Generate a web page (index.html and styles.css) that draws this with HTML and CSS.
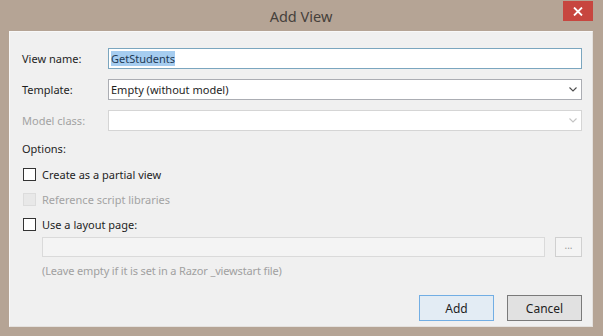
FILE: index.html
```html
<!DOCTYPE html>
<html lang="en">
<head>
<meta charset="UTF-8" />
<title>Add View</title>
<link rel="stylesheet" href="styles.css">
</head>

<body>
    <div class="window">
        <div class="titlebar">
            <span></span>
            <span class="title">Add View</span>
            <button class="close" aria-label="Close">
                <svg width="10" height="9" viewBox="0 0 10 9">
                    <path d="M1 0.5 L9 8.5 M9 0.5 L1 8.5" stroke="#fff" stroke-width="1.8" fill="none" />
                </svg>
            </button>
        </div>

        <div class="content">
            <div class="field-row">
                <label class="field-label">View name:</label>
                <div class="textbox focused"><span class="selected">GetStudents</span></div>
            </div>
            <div class="field-row">
                <label class="field-label">Template:</label>
                <div class="combo">
                    <span>Empty (without model)</span>
                    <svg class="chevron" width="8" height="5" viewBox="0 0 8 5">
                        <path d="M0.5 0.5 L4 4 L7.5 0.5" stroke="#4d4d4d" stroke-width="1.1" fill="none" />
                    </svg>
                </div>
            </div>
            <div class="field-row disabled">
                <label class="field-label">Model class:</label>
                <div class="combo">
                    <span></span>
                    <svg class="chevron" width="8" height="5" viewBox="0 0 8 5">
                        <path d="M0.5 0.5 L4 4 L7.5 0.5" stroke="#c4c4c4" stroke-width="1.1" fill="none" />
                    </svg>
                </div>
            </div>

            <div class="options-label">Options:</div>
            <div class="check-row"><span class="checkbox"></span>Create as a partial view</div>
            <div class="check-row disabled"><span class="checkbox"></span>Reference script libraries</div>
            <div class="check-row"><span class="checkbox"></span>Use a layout page:</div>

            <div class="layout-row">
                <div class="textbox disabled"></div>
                <button class="browse">...</button>
            </div>
            <div class="hint">(Leave empty if it is set in a Razor _viewstart file)</div>

            <div class="actions">
                <button class="btn primary">Add</button>
                <button class="btn">Cancel</button>
            </div>
        </div>
    </div>
</body>

</html>
```

FILE: styles.css
```css
body {
    margin: 0;
    background-color: #b5a495;
    font-family: "Segoe UI", "Noto Sans", sans-serif;
    font-size: 11px;
    color: #1e1e1e;
}

.window {
    height: 336px;
    box-sizing: border-box;
    padding: 0 10px 9px 9px;
    display: flex;
    flex-direction: column;
}

/* Title bar */
.titlebar {
    height: 31px;
    display: grid;
    grid-template-columns: 1fr auto 1fr;
    align-items: start;
}

.title {
    font-size: 14.5px;
    color: #45403b;
    padding-top: 6px;
}

.close {
    justify-self: end;
    width: 30px;
    height: 20px;
    margin-top: 1px;
    border: none;
    padding: 0;
    background-color: #c7463f;
    display: flex;
    align-items: center;
    justify-content: center;
}

/* Dialog body */
.content {
    flex: 1;
    background-color: #f0f0f0;
    border: 1px solid #f8f8f8;
    border-right-color: #e4e1de;
    border-bottom-color: #e4e1de;
    padding: 16px 10px 0 12px;
    display: flex;
    flex-direction: column;
}

.field-row {
    display: flex;
    align-items: center;
    height: 21px;
    margin-bottom: 10px;
}

.field-label {
    width: 86px;
    flex-shrink: 0;
}

.textbox,
.combo {
    flex: 1;
    height: 21px;
    box-sizing: border-box;
    border: 1px solid #abadb3;
    background-color: #fff;
    padding: 0 2px;
    display: flex;
    align-items: center;
}

.textbox.focused {
    border-color: #7ba6bf;
}

.selected {
    background-color: #a6cdf0;
    color: #1f3a55;
    line-height: 15px;
}

.combo {
    justify-content: space-between;
    padding-right: 4px;
}

.disabled {
    color: #a3a3a3;
}

.disabled .combo {
    border-color: #d5d5d5;
}

.options-label {
    line-height: 16px;
}

.check-row {
    display: flex;
    align-items: center;
    height: 16px;
    margin-top: 9px;
    padding-left: 1px;
}

.checkbox {
    width: 13px;
    height: 13px;
    box-sizing: border-box;
    border: 1px solid #333;
    background-color: #fff;
    margin-right: 6px;
}

.check-row.disabled .checkbox {
    border-color: #dcdcdc;
    background-color: #e8e8e8;
}

.layout-row {
    display: flex;
    gap: 10px;
    margin-top: 5px;
    padding-left: 20px;
}

.layout-row .textbox {
    height: 20px;
    border-color: #dadada;
    background-color: #f4f4f4;
}

.browse {
    width: 27px;
    height: 20px;
    border: 1px solid #d0d0d0;
    background-color: #f4f4f4;
    color: #9a9a9a;
    font-family: inherit;
    font-size: 10px;
    padding: 0 0 4px;
}

.hint {
    color: #a0a0a0;
    line-height: 16px;
    margin-top: 6px;
    padding-left: 20px;
    letter-spacing: -0.15px;
}

.actions {
    display: flex;
    justify-content: flex-end;
    gap: 13px;
    margin-top: 16px;
}

.btn {
    width: 75px;
    height: 26px;
    font-family: inherit;
    font-size: 12px;
    color: #1e1e1e;
    background-color: #e1e1e1;
    border: 1px solid #7a7a7a;
}

.btn.primary {
    background-color: #e3ecf4;
    border-color: #72aee4;
}
```
